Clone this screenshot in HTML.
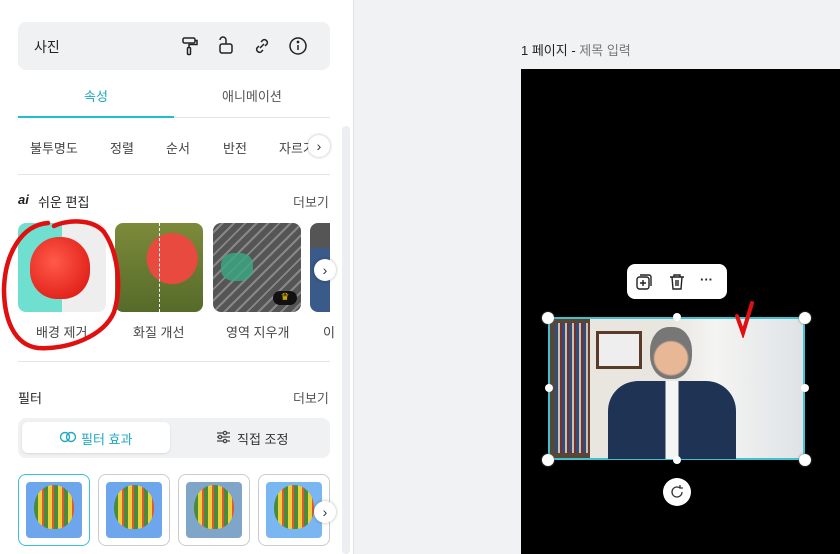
<!DOCTYPE html>
<html><head><meta charset="utf-8"><style>
*{box-sizing:border-box;margin:0;padding:0}
body{width:840px;height:554px;overflow:hidden;font-family:"Liberation Sans","Noto Sans CJK KR",sans-serif;background:#f1f2f4;position:relative;color:#222}
.p{position:absolute}
.left{left:0;top:0;width:354px;height:554px;background:#fff;border-right:1px solid #e3e4e8}
.t{position:absolute;font-size:13px;color:#444;white-space:nowrap}
.card{position:absolute;border-radius:8px;overflow:hidden}
.arrow{position:absolute;width:22px;height:22px;border-radius:50%;background:#fff;box-shadow:0 0 3px rgba(0,0,0,.3);font-size:14px;line-height:22px;text-align:center;color:#333}
.bal{position:absolute;width:72px;height:72px;border-radius:8px;border:1px solid #ccc;background:#fff}
.bal div{position:absolute;left:7px;top:7px;width:56px;height:56px;border-radius:4px;background:#6ea6ee}
.bal div:after{content:"";position:absolute;left:8px;top:3px;width:40px;height:44px;border-radius:50% 50% 45% 45%;background:repeating-linear-gradient(90deg,#4a8a3c 0 4px,#e8d23a 4px 8px,#e2563a 8px 10px)}
</style></head><body>
<div class="p left">
 <div class="p" style="left:18px;top:22px;width:312px;height:48px;background:#f0f1f3;border-radius:8px"></div>
 <div class="t" style="left:34px;top:37px;color:#222;font-size:14px">사진</div>
 <svg class="p" style="left:180px;top:36px" width="20" height="20" viewBox="0 0 20 20" fill="none" stroke="#222" stroke-width="1.5"><rect x="3" y="2" width="12" height="5" rx="1.5"/><path d="M15 4.5h2v4H9v3"/><rect x="7.5" y="11.5" width="3" height="7" rx="1"/></svg>
 <svg class="p" style="left:216px;top:36px" width="20" height="20" viewBox="0 0 20 20" fill="none" stroke="#222" stroke-width="1.5"><path d="M4 4a3 3 0 0 1 6 0v4"/><rect x="4" y="8" width="12" height="9" rx="2"/></svg>
 <svg class="p" style="left:252px;top:36px" width="20" height="20" viewBox="0 0 20 20" fill="none" stroke="#222" stroke-width="1.5"><path d="M9 6l2-2a3 3 0 0 1 4 4l-2 2M11 14l-2 2a3 3 0 0 1-4-4l2-2M8 12l4-4"/></svg>
 <svg class="p" style="left:288px;top:36px" width="20" height="20" viewBox="0 0 20 20" fill="none" stroke="#222" stroke-width="1.5"><circle cx="10" cy="10" r="8"/><path d="M10 9v5"/><circle cx="10" cy="6" r=".6" fill="#222"/></svg>
 <div class="t" style="left:84px;top:86px;color:#1ea9bf">속성</div>
 <div class="t" style="left:222px;top:86px;color:#555">애니메이션</div>
 <div class="p" style="left:18px;top:117px;width:312px;height:1px;background:#e3e4e8"></div>
 <div class="p" style="left:18px;top:116px;width:156px;height:2px;background:#1ec0cf"></div>
 <div class="p" style="left:342px;top:126px;width:8px;height:428px;background:#eceef1;border-radius:4px"></div>
 <div class="t" style="left:30px;top:138px">불투명도</div>
 <div class="t" style="left:110px;top:138px">정렬</div>
 <div class="t" style="left:166px;top:138px">순서</div>
 <div class="t" style="left:223px;top:138px">반전</div>
 <div class="t" style="left:279px;top:138px;width:30px;overflow:hidden">자르기</div>
 <div class="arrow" style="left:308px;top:135px">›</div>
 <div class="p" style="left:18px;top:174px;width:312px;height:1px;background:#e3e4e8"></div>
 <div class="t" style="left:18px;top:192px;font-style:italic;font-weight:bold;color:#222">ai</div>
 <div class="t" style="left:38px;top:192px;color:#222">쉬운 편집</div>
 <div class="t" style="left:293px;top:192px;color:#555">더보기</div>
 <div class="card" style="left:18px;top:223px;width:88px;height:89px;background:linear-gradient(90deg,#6fe0d0 0 44px,#eee 44px)">
   <div class="p" style="left:12px;top:14px;width:60px;height:62px;border-radius:48% 48% 45% 45%;background:radial-gradient(circle at 40% 40%,#ff5a4a,#d8100c)"></div></div>
 <div class="card" style="left:115px;top:223px;width:88px;height:89px;background:radial-gradient(circle at 65% 40%,#e84a40 0 25px,transparent 26px),linear-gradient(#7c8a3a,#566b2a)"><div class="p" style="left:44px;top:0;width:1px;height:89px;border-left:1px dashed #fff"></div></div>
 <div class="card" style="left:213px;top:223px;width:88px;height:89px;background:repeating-linear-gradient(135deg,#555 0 6px,#888 6px 8px)"><div class="p" style="left:8px;top:30px;width:32px;height:28px;border-radius:40%;background:#3aa983;opacity:.8"></div><div class="p" style="left:60px;top:68px;width:24px;height:14px;border-radius:7px;background:#111;color:#f7c600;font-size:10px;text-align:center;line-height:14px">♛</div></div>
 <div class="card" style="left:310px;top:223px;width:20px;height:89px;background:linear-gradient(#555 0 25px,#3a5a8a 25px);border-radius:8px 0 0 8px"></div>
 <div class="arrow" style="left:314px;top:259px">›</div>
 <div class="t" style="left:36px;top:322px">배경 제거</div>
 <div class="t" style="left:133px;top:322px">화질 개선</div>
 <div class="t" style="left:226px;top:322px">영역 지우개</div>
 <div class="t" style="left:323px;top:322px">이</div>
 <svg class="p" style="left:0;top:215px" width="125" height="140"><path d="M48 8C22 10 5 38 4 74c0 30 10 56 34 59 30 2 66-12 76-36 8-25 4-60-10-80-12-14-38-12-50-6" fill="none" stroke="#e01010" stroke-width="4.5" stroke-linecap="round"/></svg>
 <div class="p" style="left:18px;top:361px;width:312px;height:1px;background:#e3e4e8"></div>
 <div class="t" style="left:18px;top:388px;color:#222">필터</div>
 <div class="t" style="left:293px;top:388px;color:#555">더보기</div>
 <div class="p" style="left:18px;top:418px;width:312px;height:40px;background:#f0f1f3;border-radius:8px"></div>
 <div class="p" style="left:22px;top:422px;width:148px;height:31px;background:#fff;border-radius:6px;box-shadow:0 1px 2px rgba(0,0,0,.1)"></div>
 <svg class="p" style="left:59px;top:431px" width="18" height="12" fill="none" stroke="#1ea9bf" stroke-width="1.4"><circle cx="6" cy="6" r="4.5"/><circle cx="12" cy="6" r="4.5"/></svg>
 <div class="t" style="left:81px;top:429px;color:#1ea9bf">필터 효과</div>
 <svg class="p" style="left:216px;top:430px" width="15" height="14" fill="none" stroke="#444" stroke-width="1.3"><path d="M1 3h13M1 7h13M1 11h13"/><circle cx="9" cy="3" r="1.6" fill="#fff"/><circle cx="4" cy="7" r="1.6" fill="#fff"/><circle cx="9" cy="11" r="1.6" fill="#fff"/></svg>
 <div class="t" style="left:237px;top:429px;color:#333">직접 조정</div>
 <div class="bal" style="left:18px;top:474px;border:1px solid #36c3d2"><div></div></div>
 <div class="bal" style="left:98px;top:474px"><div></div></div>
 <div class="bal" style="left:178px;top:474px"><div style="background:#7fa6c8"></div></div>
 <div class="bal" style="left:258px;top:474px"><div style="background:#7ab6f2"></div></div>
 <div class="arrow" style="left:314px;top:501px">›</div>
</div>
<div class="t" style="left:521px;top:40px;color:#222">1 페이지 - <span style="color:#777">제목 입력</span></div>
<div class="p" style="left:521px;top:69px;width:319px;height:485px;background:#000"></div>
<div class="p" style="left:627px;top:264px;width:100px;height:35px;background:#fff;border-radius:8px"></div>
<svg class="p" style="left:634px;top:272px" width="20" height="20" fill="none" stroke="#222" stroke-width="1.4"><rect x="3" y="5" width="12" height="12" rx="2.5"/><path d="M6 3h9a2 2 0 0 1 2 2v9M9 8v6M6 11h6"/></svg>
<svg class="p" style="left:668px;top:272px" width="18" height="20" fill="none" stroke="#222" stroke-width="1.4"><path d="M2 5h14M6 5V3h6v2M4 5l1 12h8l1-12M8 8v6M10 8v6"/></svg>
<div class="t" style="left:700px;top:272px;color:#222;font-weight:bold">···</div>
<div class="p" style="left:548px;top:317px;width:257px;height:143px;border:2px solid #3dc3d2;background:linear-gradient(90deg,#5a4634 0 40px,#e9e6df 40px 120px,#f4f4f2 165px,#dfe3e6)">
 <div class="p" style="left:5px;top:4px;width:34px;height:130px;background:repeating-linear-gradient(90deg,#2f4f7a 0 3px,#c9c2b0 3px 5px,#7a2f2f 5px 7px)"></div>
 <div class="p" style="left:46px;top:12px;width:46px;height:38px;border:3px solid #5a3a28;background:#eee"></div>
 <div class="p" style="left:100px;top:8px;width:42px;height:52px;border-radius:45%;background:radial-gradient(circle at 50% 60%,#e8b896 0 16px,#777 18px)"></div>
 <div class="p" style="left:58px;top:62px;width:128px;height:78px;border-radius:30px 30px 0 0;background:linear-gradient(90deg,#1f3355 0 45%,#f5f5f5 45% 55%,#1f3355 55%)"></div>
</div>
<svg class="p" style="left:732px;top:300px" width="26" height="38"><path d="M5 16l6 17 9-30" fill="none" stroke="#e01010" stroke-width="4" stroke-linecap="round"/></svg>
<div class="p" style="left:542px;top:312px;width:12px;height:12px;border-radius:50%;background:#fff;box-shadow:0 0 2px #666"></div>
<div class="p" style="left:799px;top:312px;width:12px;height:12px;border-radius:50%;background:#fff;box-shadow:0 0 2px #666"></div>
<div class="p" style="left:542px;top:454px;width:12px;height:12px;border-radius:50%;background:#fff;box-shadow:0 0 2px #666"></div>
<div class="p" style="left:799px;top:454px;width:12px;height:12px;border-radius:50%;background:#fff;box-shadow:0 0 2px #666"></div>
<div class="p" style="left:673px;top:313px;width:8px;height:8px;border-radius:50%;background:#fff"></div>
<div class="p" style="left:673px;top:456px;width:8px;height:8px;border-radius:50%;background:#fff"></div>
<div class="p" style="left:545px;top:384px;width:8px;height:8px;border-radius:50%;background:#fff"></div>
<div class="p" style="left:801px;top:384px;width:8px;height:8px;border-radius:50%;background:#fff"></div>
<div class="p" style="left:663px;top:478px;width:28px;height:28px;border-radius:50%;background:#fff"></div>
<svg class="p" style="left:669px;top:484px" width="16" height="16" fill="none" stroke="#333" stroke-width="1.3"><path d="M13 8a5 5 0 1 1-2-4M11 1v3h3"/></svg>
</body></html>
